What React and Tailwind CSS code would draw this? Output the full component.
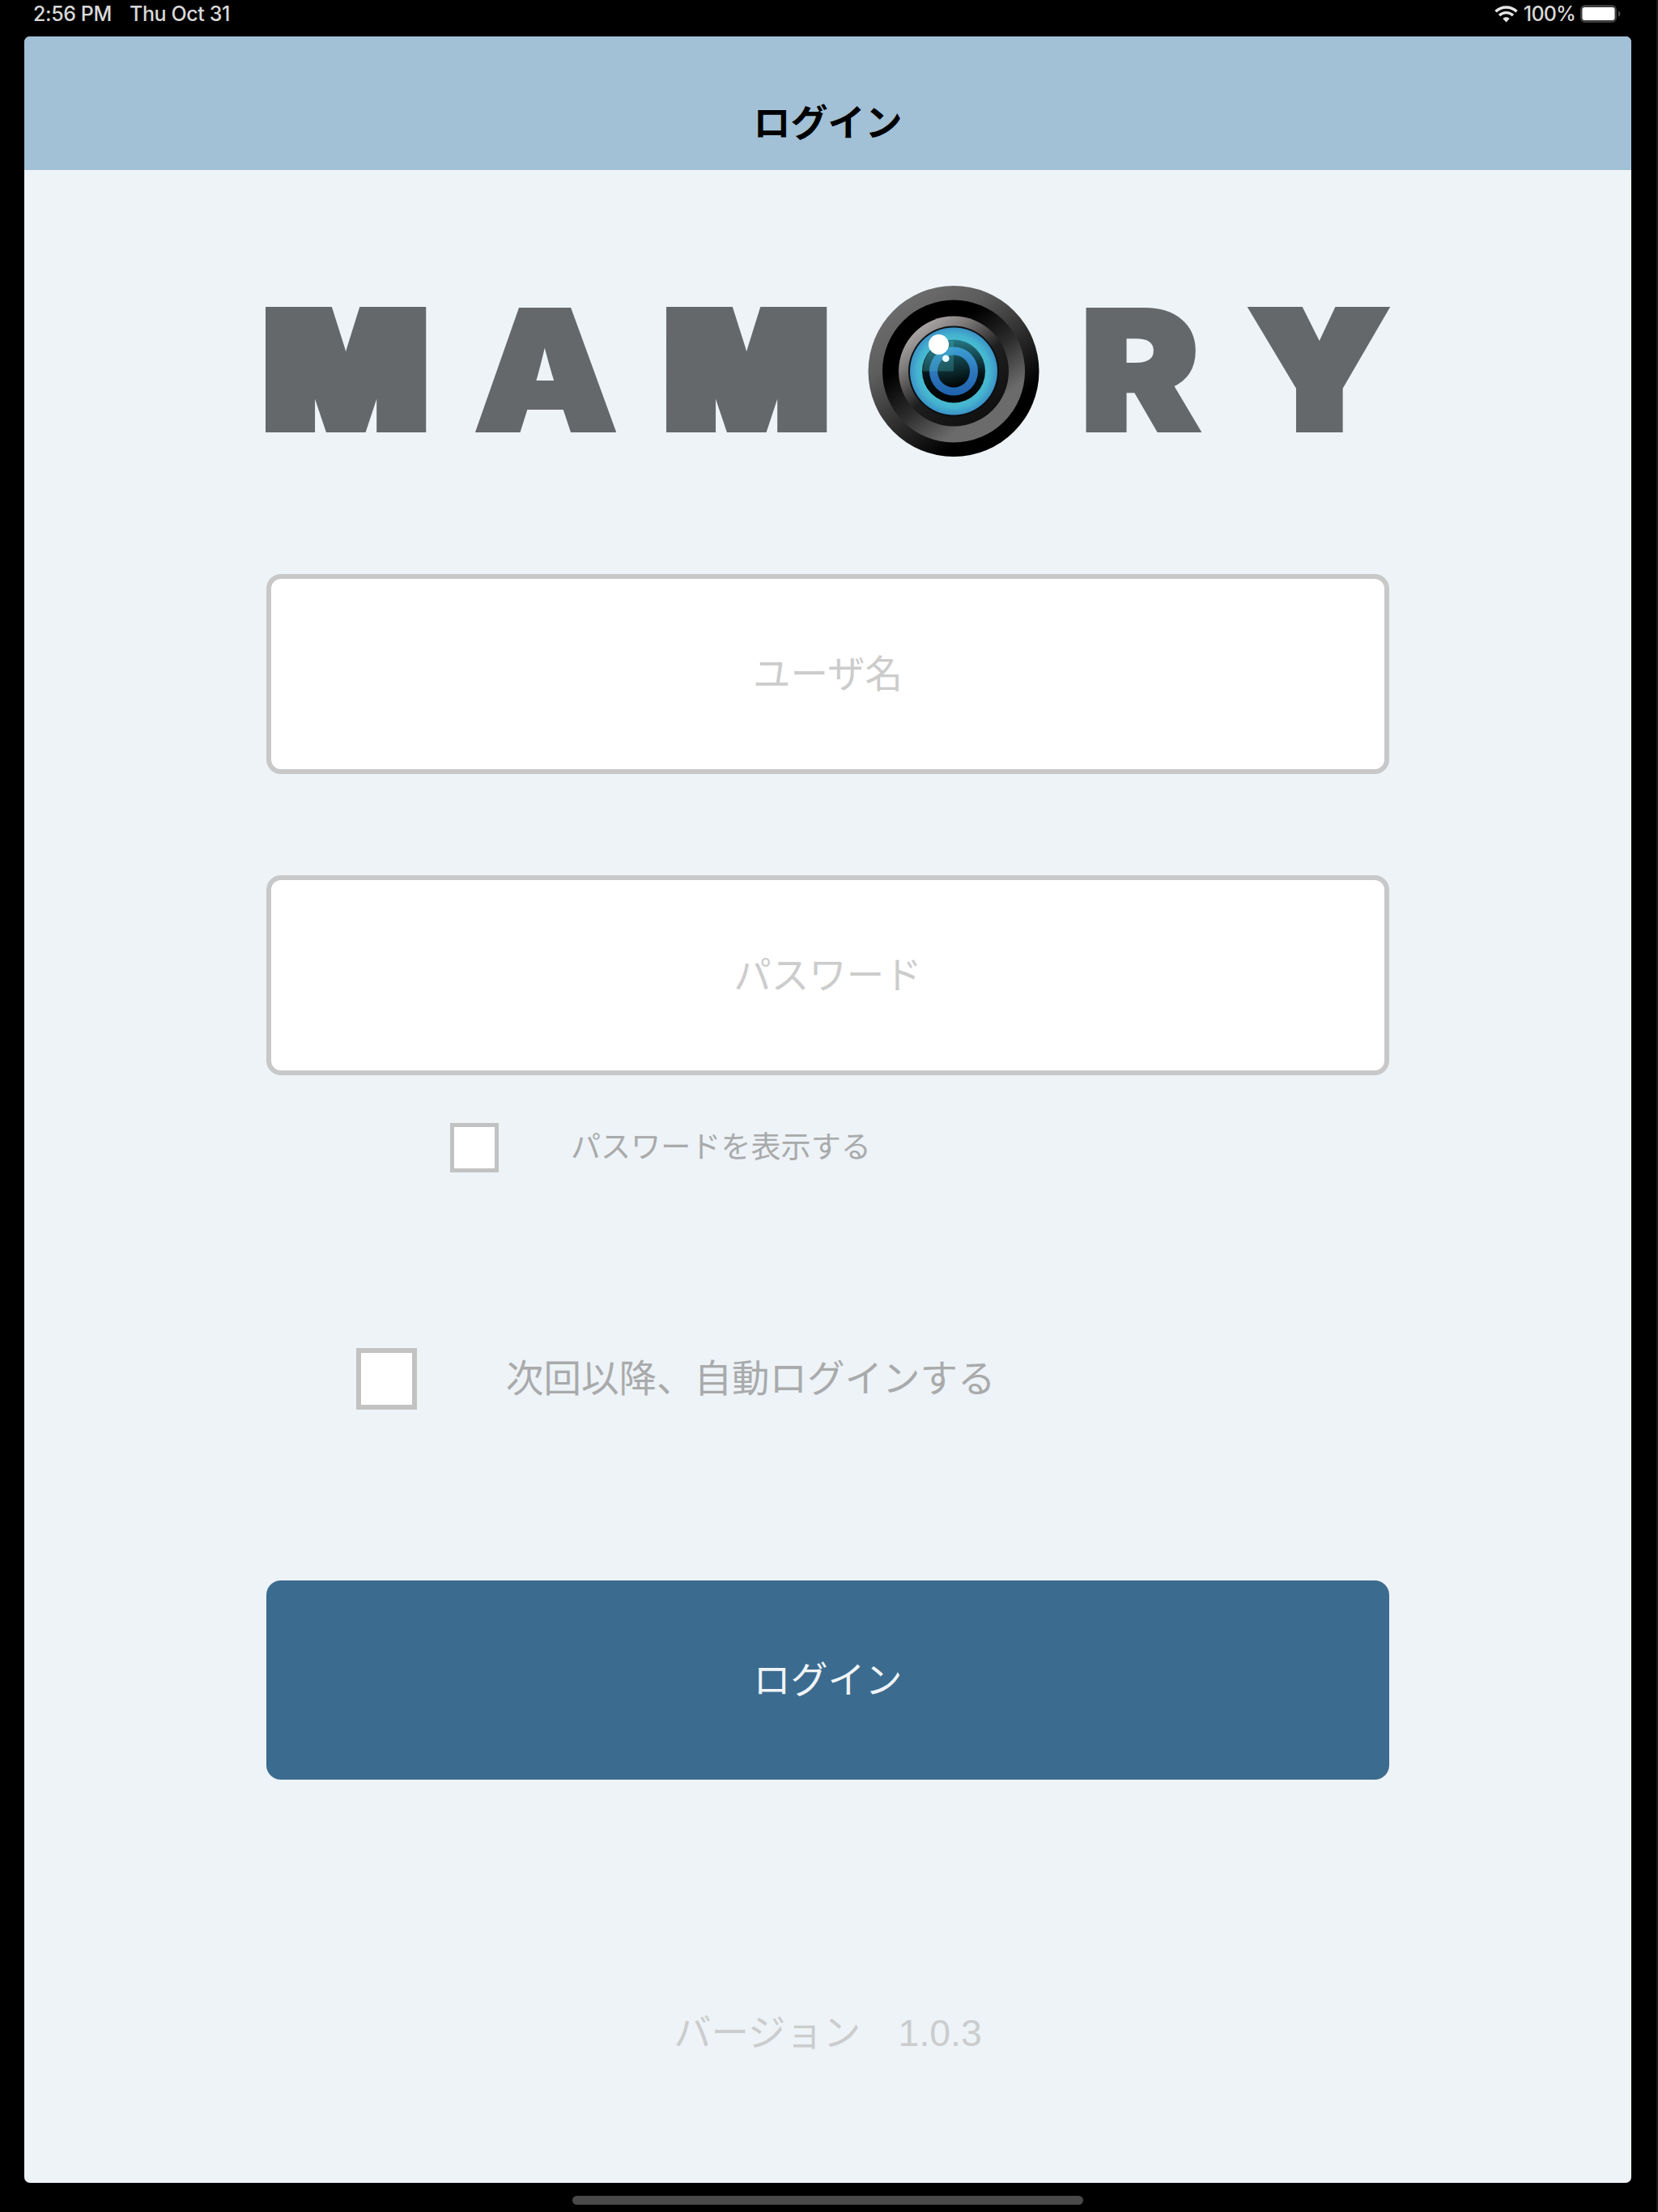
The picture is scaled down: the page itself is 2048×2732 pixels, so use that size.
import React, { useState } from 'react'

function WifiIcon() {
    return (
        <svg className="w-[29px] h-[21px]" viewBox="0 0 29 21" fill="none" stroke="#e6e6e6">
            <path d="M1.5 7.2C8.800 .2 20.200 .2 27.500 7.200" strokeWidth="3.600" />
            <path d="M6 12C10.800 7.500 18.200 7.500 23 12" strokeWidth="3.400" />
            <path d="M14.500 20.500L10.300 16C12.700 13.800 16.300 13.800 18.700 16Z" fill="#e6e6e6" stroke="none" />
        </svg>
    )
}

function BatteryIcon() {
    return (
        <svg className="w-[52px] h-[24px]" viewBox="0 0 52 24">
            <rect x="1" y="1" width="45" height="22" rx="6" fill="#3d3d3d" />
            <rect x="3.500" y="4" width="40" height="16" rx="3" fill="#fff" />
            <path d="M48 8.500C51.300 9.500 51.300 14.500 48 15.500Z" fill="#4a4a4a" />
        </svg>
    )
}

function StatusBar() {
    return (
        <div className="h-[45px] pl-[41px] pr-[43px] pb-[11px] flex items-center justify-between text-[#d8d8d8] text-[25px] leading-none font-medium font-['Inter',sans-serif]">
            <div className="flex gap-[23px]">
                <span className="w-[96px] whitespace-nowrap tracking-[-0.4px]">2:56 PM</span>
                <span className="whitespace-nowrap tracking-[-0.4px]">Thu Oct 31</span>
            </div>
            <div className="flex items-center">
                <WifiIcon />
                <span className="w-[76px] pl-[2px] text-center tracking-[-0.8px]">100%</span>
                <BatteryIcon />
            </div>
        </div>
    )
}

function Lens() {
    return (
        <g transform="translate(849 106.500)">
            <circle r="105.500" fill="url(#rim)" />
            <circle r="88" fill="url(#barrel)" />
            <circle r="68" fill="url(#inner)" />
            <circle r="56" fill="#0b0f12" />
            <circle r="54" fill="url(#iris)" />
            <circle r="39" fill="url(#darkRing)" />
            <circle r="30" fill="url(#blueRing)" />
            <circle r="20" fill="url(#pupil)" />
            <path d="M0 0H-38A38 38 0 0 1 0 -38Z" fill="#49b3bd" opacity="0.300" />
            <circle cx="-18.500" cy="-33" r="12.500" fill="#fff" />
            <circle cx="-9.700" cy="-15.700" r="4.300" fill="#e9fbff" />
        </g>
    )
}

function Logo() {
    return (
        <svg className="w-[1410px] h-[273px]" viewBox="-10 -30 1410 273">
            <defs>
                <linearGradient id="rim" x1="0.200" y1="0.100" x2="0.800" y2="0.900">
                    <stop offset="0" stopColor="#6c6c6c" />
                    <stop offset="0.250" stopColor="#5c5c5c" />
                    <stop offset="0.550" stopColor="#2e2e2e" />
                    <stop offset="0.850" stopColor="#000" />
                </linearGradient>
                <linearGradient id="barrel" x1="0.200" y1="0.100" x2="0.800" y2="0.900">
                    <stop offset="0.250" stopColor="#000" />
                    <stop offset="0.550" stopColor="#2b2b2b" />
                    <stop offset="0.850" stopColor="#6b6b6b" />
                </linearGradient>
                <linearGradient id="inner" x1="0.200" y1="0.100" x2="0.800" y2="0.900">
                    <stop offset="0" stopColor="#a8a4a4" />
                    <stop offset="0.200" stopColor="#807c7c" />
                    <stop offset="0.550" stopColor="#1e1e1e" />
                    <stop offset="1" stopColor="#101010" />
                </linearGradient>
                <radialGradient id="iris">
                    <stop offset="0.700" stopColor="#48bdd0" />
                    <stop offset="0.830" stopColor="#45b3d0" />
                    <stop offset="1" stopColor="#3b92c6" />
                </radialGradient>
                <linearGradient id="darkRing" x1="0" y1="0" x2="0" y2="1">
                    <stop offset="0" stopColor="#257785" />
                    <stop offset="0.550" stopColor="#041417" />
                    <stop offset="1" stopColor="#000" />
                </linearGradient>
                <linearGradient id="blueRing" x1="0" y1="0" x2="0" y2="1">
                    <stop offset="0" stopColor="#3d9fd3" />
                    <stop offset="0.500" stopColor="#2d78bd" />
                    <stop offset="1" stopColor="#1f62ae" />
                </linearGradient>
                <linearGradient id="pupil" x1="0.300" y1="0" x2="0.500" y2="1">
                    <stop offset="0" stopColor="#175059" />
                    <stop offset="1" stopColor="#000405" />
                </linearGradient>
            </defs>
            <g
                className="font-['Inter',sans-serif] font-black text-[188px]"
                fill="#65686b"
                stroke="#65686b"
                strokeWidth="18"
                textAnchor="middle"
            >
                <text transform="translate(98 173) scale(1.100 1)">M</text>
                <text className="text-[204px]" strokeWidth="6" transform="translate(345 179) scale(1.080 1)">A</text>
                <text transform="translate(593 173) scale(1.100 1)">M</text>
                <text className="text-[204px]" strokeWidth="6" transform="translate(1079 179) scale(1.080 1)">R</text>
                <text transform="translate(1300 173) scale(1.050 1)">Y</text>
            </g>
            <Lens />
        </svg>
    )
}

function Field({ type, placeholder, value, onChange }) {
    return (
        <input
            type={type}
            placeholder={placeholder}
            value={value}
            onChange={(e) => onChange(e.target.value)}
            className="block w-[1387px] h-[247px] bg-white border-[6px] border-[#c8c8c8] rounded-[18px] text-center text-[46.500px] text-black placeholder:text-[#cccccc] placeholder:opacity-100 outline-none"
        />
    )
}

function App() {
    const [user, setUser] = useState('')
    const [password, setPassword] = useState('')
    const [showPassword, setShowPassword] = useState(false)
    const [autoLogin, setAutoLogin] = useState(false)

    return (
        <div className="w-[2048px] h-[2732px] bg-black border-r-2 border-[#1b1b17] flex flex-col font-['Liberation_Sans','Noto_Sans_CJK_JP',sans-serif]">
            <StatusBar />
            <div className="ml-[30px] w-[1985px] h-[2651px] bg-[#edf3f7] rounded-[7px] overflow-hidden flex flex-col">
                <header className="h-[165px] shrink-0 pt-[50px] bg-[#a2c0d6] text-center text-[46px] leading-[115px] font-bold text-black">
                    ログイン
                </header>
                <main className="pt-[112px] pl-[299px] flex flex-col items-start">
                    <div className="-ml-[10px]">
                        <Logo />
                    </div>
                    <div className="mt-[114px]">
                        <Field type="text" placeholder="ユーザ名" value={user} onChange={setUser} />
                    </div>
                    <div className="mt-[125px]">
                        <Field
                            type={showPassword ? 'text' : 'password'}
                            placeholder="パスワード"
                            value={password}
                            onChange={setPassword}
                        />
                    </div>
                    <label className="mt-[59px] ml-[227px] h-[61px] flex items-center text-[37.100px] leading-none text-[#a9aaab]">
                        <input
                            type="checkbox"
                            checked={showPassword}
                            onChange={(e) => setShowPassword(e.target.checked)}
                            className="appearance-none w-[60px] h-[61px] mr-[89px] bg-white border-[5px] border-[#c2c2c2]"
                        />
                        パスワードを表示する
                    </label>
                    <label className="mt-[217px] ml-[111px] h-[76px] flex items-center text-[46.500px] leading-none text-[#a9aaab]">
                        <input
                            type="checkbox"
                            checked={autoLogin}
                            onChange={(e) => setAutoLogin(e.target.checked)}
                            className="appearance-none w-[75px] h-[76px] mr-[110px] bg-white border-[6px] border-[#c2c2c2]"
                        />
                        次回以降、自動ログインする
                    </label>
                    <button className="mt-[211px] w-[1387px] h-[246px] rounded-[18px] bg-[#3b6b8f] text-[#f0f4f7] text-[46px]">
                        ログイン
                    </button>
                    <p className="mt-[277px] w-[1387px] text-center text-[46.400px] leading-[72px] text-[#cbcccd]">
                        バージョン　1.0.3
                    </p>
                </main>
            </div>
            <div className="mt-[16px] ml-[707px] w-[631px] h-[11px] rounded-full bg-[#4a4a4a]" />
        </div>
    )
}

export default App
